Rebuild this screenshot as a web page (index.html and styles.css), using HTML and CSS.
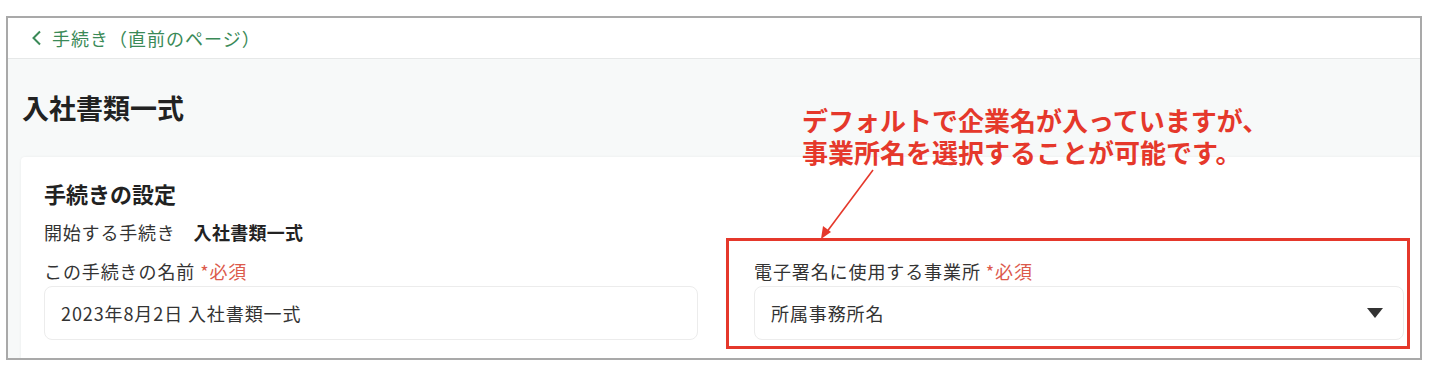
FILE: index.html
```html
<!DOCTYPE html>
<html lang="ja">
<head>
<meta charset="utf-8">
<link rel="stylesheet" href="styles.css">
</head>
<body>
<div class="frame">
  <header class="topbar">
    <a class="back">
      <svg class="chev" width="14" height="16" viewBox="0 0 14 16"><path d="M10 1.5 L3.5 8 L10 14.5" fill="none" stroke="#3a8a57" stroke-width="2"/></svg>
      <span>手続き（直前のページ）</span>
    </a>
  </header>
  <main class="main">
    <h1 class="title">入社書類一式</h1>
    <section class="card">
      <h2 class="card-title">手続きの設定</h2>
      <div class="start-row">開始する手続き<b class="start-name">入社書類一式</b></div>
      <div class="cols">
        <div class="field">
          <div class="label">この手続きの名前 <span class="req">*必須</span></div>
          <div class="input">2023年8月2日 入社書類一式</div>
        </div>
        <div class="field">
          <div class="label">電子署名に使用する事業所 <span class="req">*必須</span></div>
          <div class="input select"><span>所属事務所名</span><span class="tri"></span></div>
        </div>
      </div>
    </section>
  </main>
</div>
<div class="note">
  <div class="note-line">デフォルトで企業名が入っていますが、</div>
  <div class="note-line">事業所名を選択することが可能です。</div>
</div>
<div class="redbox"></div>
<svg class="arrow" width="1432" height="380" viewBox="0 0 1432 380">
  <line x1="873" y1="170" x2="826" y2="233" stroke="#e5382b" stroke-width="1.6"/>
  <polygon points="821,239 823,226 831,232" fill="#e5382b"/>
</svg>
</body>
</html>
```
FILE: styles.css
```css
* { box-sizing: border-box; }
html, body { margin: 0; padding: 0; background: #fff; }
body {
  position: relative;
  width: 1432px;
  height: 380px;
  overflow: hidden;
  font-family: "Noto Sans CJK JP", "Noto Sans", sans-serif;
  color: #333;
}
.frame {
  margin: 16px 0 0 6px;
  width: 1416px;
  height: 344px;
  border: 2px solid #a9a9a9;
  overflow: hidden;
  background: #fff;
}
.topbar {
  height: 41px;
  border-bottom: 1px solid #e6e8e8;
  display: flex;
  align-items: center;
  padding-left: 22px;
}
.back {
  display: flex;
  align-items: center;
  gap: 8px;
  color: #3a8a57;
  font-size: 18px;
  line-height: 40px;
  letter-spacing: 1px;
}
.chev { display: block; }
.main {
  background: #f7f9f9;
  padding: 31px 0 0 13px;
  height: 300px;
}
.title {
  margin: 0 0 31px 1px;
  font-size: 27px;
  line-height: 36px;
  font-weight: 700;
  color: #222;
}
.card {
  background: #fff;
  margin-right: -40px;
  border-radius: 4px;
  box-shadow: 0 0 3px rgba(0,0,0,0.06);
  padding: 21px 0 0 23px;
  height: 220px;
}
.card-title {
  margin: 0;
  font-size: 22px;
  line-height: 30px;
  font-weight: 700;
  color: #222;
}
.start-row {
  margin-top: 11px;
  font-size: 18px;
  line-height: 26px;
  letter-spacing: 0.8px;
}
.start-name {
  margin-left: 18px;
  font-weight: 700;
  color: #222;
  letter-spacing: 0.3px;
}
.cols {
  display: grid;
  grid-template-columns: 654px 650px;
  column-gap: 56px;
  margin-top: 13px;
}
.label {
  font-size: 18px;
  line-height: 26px;
  letter-spacing: 0.9px;
}
.req { color: #dc5a4c; }
.input {
  margin-top: 2px;
  height: 54px;
  border: 1px solid #ececec;
  border-radius: 8px;
  padding: 0 16px;
  display: flex;
  align-items: center;
  font-size: 18px;
  color: #333;
  letter-spacing: 0.9px;
}
.select {
  justify-content: space-between;
  padding-right: 20px;
}
.tri {
  width: 0;
  height: 0;
  border-left: 8px solid transparent;
  border-right: 8px solid transparent;
  border-top: 10px solid #333;
}
.note {
  position: absolute;
  left: 802px;
  top: 104px;
  font-size: 26px;
  font-weight: 700;
  color: #e5382b;
  white-space: nowrap;
  display: flex;
  flex-direction: column;
}
.note-line {
  height: 32px;
  line-height: 32px;
}
.redbox {
  position: absolute;
  left: 726px;
  top: 238px;
  width: 684px;
  height: 111px;
  border: 3px solid #e5382b;
}
.arrow {
  position: absolute;
  left: 0;
  top: 0;
  pointer-events: none;
}
```
